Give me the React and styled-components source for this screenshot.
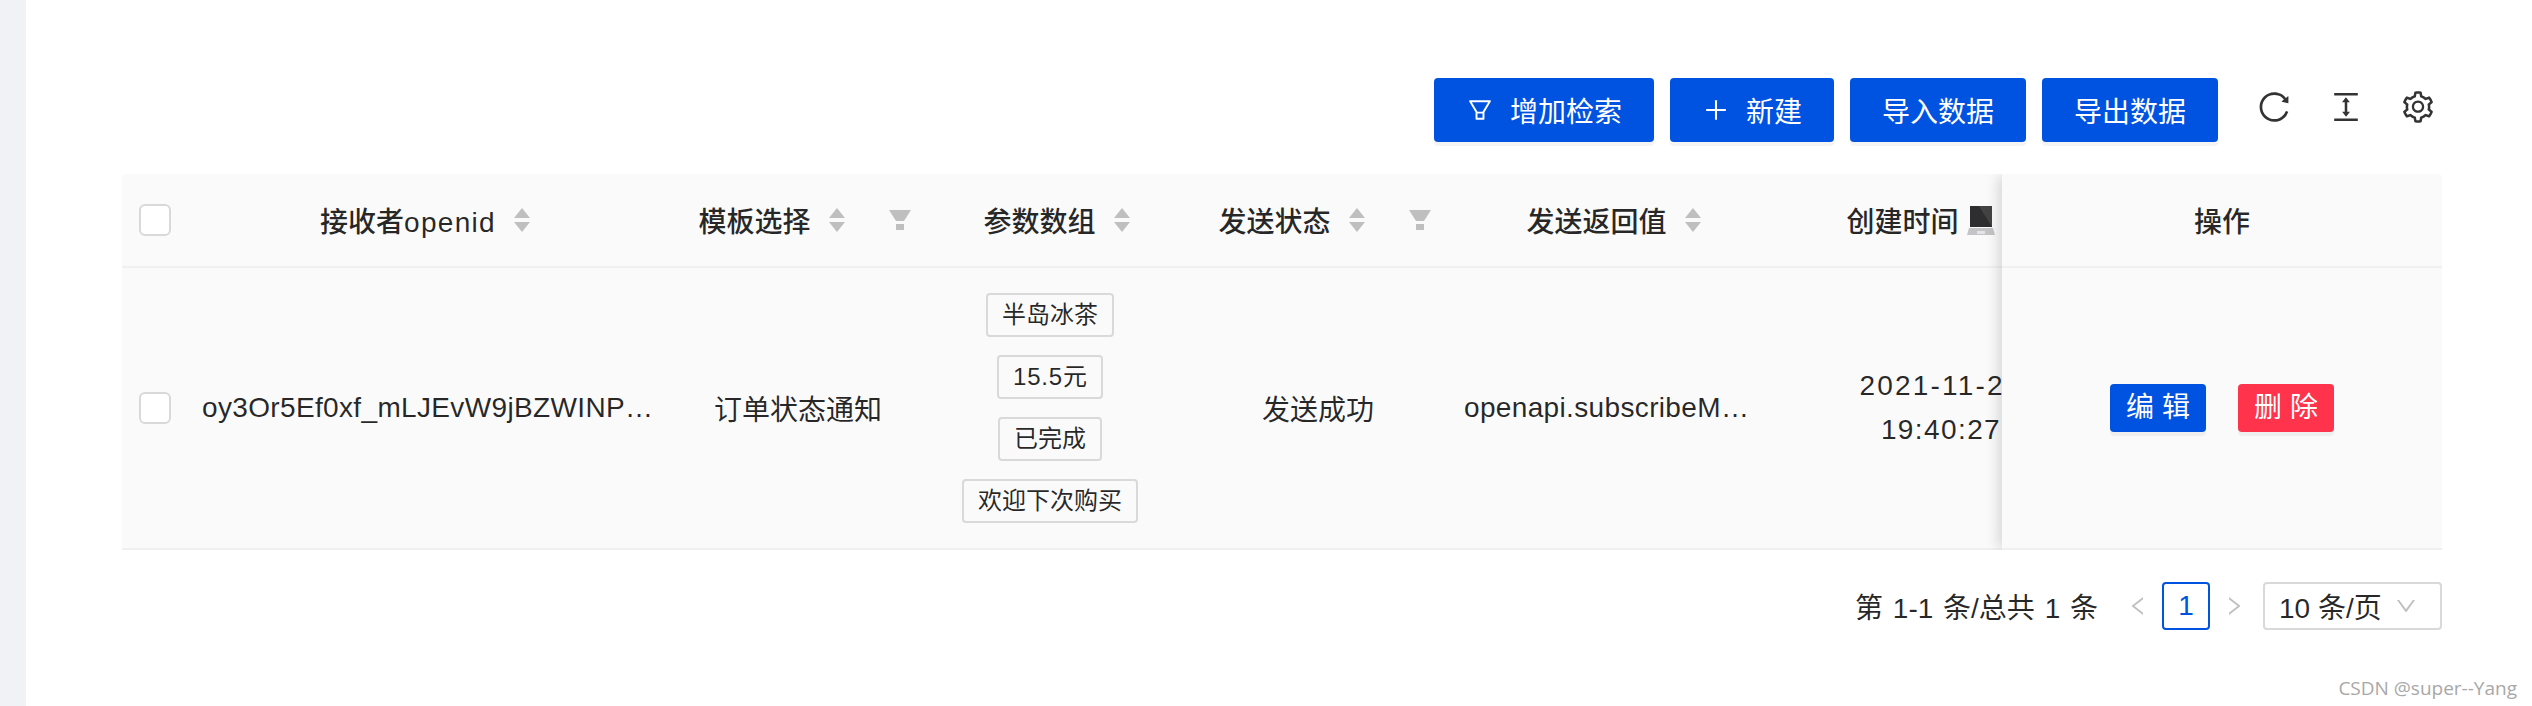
import React from "react";
import styled, { createGlobalStyle } from "styled-components";
import {
  AiOutlineFilter,
  AiOutlinePlus,
  AiOutlineReload,
  AiOutlineColumnHeight,
  AiOutlineSetting,
  AiOutlineLeft,
  AiOutlineRight,
  AiOutlineDown,
} from "react-icons/ai";

const GlobalStyle = createGlobalStyle`
  html, body {
    margin: 0;
    padding: 0;
    background: #fff;
    overflow: hidden;
  }
  * {
    box-sizing: border-box;
  }
  body {
    font-family: "Liberation Sans", "Noto Sans CJK SC", sans-serif;
    font-size: 28px;
    color: rgba(0, 0, 0, 0.85);
  }
`;

const COLUMNS = "53px 487px 272px 232px 304px 274px 394px";

const Page = styled.div`
  position: relative;
  display: flex;
  height: 706px;
`;

const Sidebar = styled.div`
  width: 26px;
  background: #f0f2f5;
`;

const Content = styled.div`
  flex: 1;
  min-width: 0;
  padding: 78px 90px 0 96px;
`;

const Toolbar = styled.div`
  display: flex;
  justify-content: flex-end;
  align-items: center;
  gap: 16px;
  padding-right: 6px;
`;

const Button = styled.button`
  display: flex;
  align-items: center;
  justify-content: center;
  gap: 16px;
  height: 64px;
  padding: 0 32px;
  border: none;
  border-radius: 4px;
  background: #0052e0;
  color: #fff;
  font: inherit;
  box-shadow: 0 4px 0 rgba(0, 0, 0, 0.045);

  svg {
    font-size: 28px;
  }
`;

const ToolIcons = styled.div`
  display: flex;
  gap: 36px;
  margin: 0 0 6px 22px;
  color: #333;
  font-size: 36px;

  svg {
    display: block;
  }
`;

const Table = styled.div`
  display: flex;
  margin-top: 32px;
  background: #fafafa;
  border-radius: 4px 4px 0 0;
  overflow: hidden;
`;

const ScrollPart = styled.div`
  flex: 1;
  min-width: 0;
  overflow: hidden;
`;

const GridRow = styled.div`
  display: grid;
  grid-template-columns: ${COLUMNS};
  height: ${(p) => p.$height}px;
  border-bottom: 2px solid #f0f0f0;
`;

const FixedPart = styled.div`
  position: relative;
  width: 440px;
  flex: none;
  background: #fafafa;
  box-shadow: -6px 0 12px -2px rgba(0, 0, 0, 0.14);
`;

const FixedRow = styled.div`
  display: flex;
  align-items: center;
  justify-content: center;
  gap: 32px;
  height: ${(p) => p.$height}px;
  border-bottom: 2px solid #f0f0f0;
`;

const HeadCell = styled.div`
  display: flex;
  align-items: center;
  justify-content: center;
  padding-left: ${(p) => p.$left || 13}px;
  padding-right: ${(p) => p.$right || 0}px;
  font-weight: 500;
  white-space: nowrap;
`;

const HeadTitle = styled.span`
  font-weight: 500;
`;

const Latin = styled.span`
  letter-spacing: ${(p) => p.$spacing}px;
`;

const Sorter = styled.svg`
  flex: none;
  width: 16px;
  height: 24px;
  margin-left: 18px;
  fill: #bfbfbf;
`;

const FilterMark = styled.svg`
  flex: none;
  width: 22px;
  height: 20px;
  margin-left: 44px;
  fill: #bfbfbf;
`;

const Laptop = styled.svg`
  flex: none;
  width: 28px;
  height: 30px;
  margin-left: 8px;
`;

const Cell = styled.div`
  display: flex;
  flex-direction: ${(p) => (p.$stack ? "column" : "row")};
  align-items: center;
  justify-content: ${(p) => (p.$inset ? "flex-start" : "center")};
  gap: 18px;
  min-width: 0;
  padding-left: ${(p) => p.$inset || 0}px;
  white-space: nowrap;
`;

const CheckCell = styled.div`
  display: flex;
  align-items: center;
  padding-left: 17px;
`;

const Checkbox = styled.span`
  display: block;
  width: 32px;
  height: 32px;
  background: #fff;
  border: 2px solid #d9d9d9;
  border-radius: 6px;
`;

const Clipped = styled.span`
  display: block;
  flex: none;
  width: ${(p) => p.$width}px;
  overflow: hidden;
  text-overflow: ellipsis;
  letter-spacing: 0.35px;
`;

const DateText = styled.div`
  line-height: 44px;
  text-align: center;
  letter-spacing: 1.4px;
`;

const Tag = styled.span`
  display: block;
  height: 44px;
  padding: 0 14px;
  line-height: 40px;
  font-size: 24px;
  background: #fafafa;
  border: 2px solid #d9d9d9;
  border-radius: 4px;
`;

const ActionButton = styled.button`
  width: 96px;
  height: 48px;
  padding: 0;
  border: none;
  border-radius: 4px;
  background: ${(p) => (p.$danger ? "#ff334b" : "#0052e0")};
  color: #fff;
  font: inherit;
  font-size: 28px;
  line-height: 48px;
  box-shadow: 0 4px 0 rgba(0, 0, 0, 0.045);
`;

const Pagination = styled.div`
  display: flex;
  justify-content: flex-end;
  align-items: center;
  height: 48px;
  margin-top: 32px;
`;

const Total = styled.span`
  margin-right: 28px;
  word-spacing: 2px;
`;

const PageArrow = styled.span`
  display: flex;
  align-items: center;
  justify-content: center;
  width: 24px;
  color: #bfbfbf;
  font-size: 24px;
`;

const PageItem = styled.span`
  width: 48px;
  height: 48px;
  margin: 0 12px;
  border: 2px solid #0052e0;
  border-radius: 4px;
  color: #0052e0;
  line-height: 44px;
  text-align: center;
`;

const SizeSelect = styled.div`
  display: flex;
  align-items: center;
  justify-content: space-between;
  width: 179px;
  height: 48px;
  margin-left: 17px;
  padding: 0 22px 0 14px;
  border: 2px solid #d9d9d9;
  border-radius: 4px;

  svg {
    color: #bfbfbf;
    font-size: 24px;
  }
`;

const Watermark = styled.span`
  position: absolute;
  right: 15px;
  bottom: 5px;
  color: #a8a8a8;
  font-family: "Open Sans", sans-serif;
  font-size: 19px;
`;

const SortIcon = () => (
  <Sorter viewBox="0 0 16 24">
    <path d="M8 0 L16 10 H0 Z" />
    <path d="M0 14 H16 L8 24 Z" />
  </Sorter>
);

const FilterIcon = () => (
  <FilterMark viewBox="0 0 22 20">
    <path d="M0 0 H22 L15 11 H7 Z" />
    <rect x="7" y="14" width="8" height="6" />
  </FilterMark>
);

const LaptopIcon = () => (
  <Laptop viewBox="0 0 28 30">
    <path d="M3 1 H25 V22 H3 Z" fill="#2e2e30" />
    <path d="M12 1 H25 V22 Z" fill="#555" opacity="0.55" />
    <path d="M2 23 H26 L28 30 H0 Z" fill="#c4c4c6" />
    <rect x="10" y="26" width="8" height="3" fill="#e4e4e6" />
  </Laptop>
);

const App = () => {
  return (
    <Page>
      <GlobalStyle />
      <Sidebar />
      <Content>
        <Toolbar>
          <Button>
            <AiOutlineFilter />
            增加检索
          </Button>
          <Button>
            <AiOutlinePlus />
            新建
          </Button>
          <Button>导入数据</Button>
          <Button>导出数据</Button>
          <ToolIcons>
            <AiOutlineReload />
            <AiOutlineColumnHeight />
            <AiOutlineSetting />
          </ToolIcons>
        </Toolbar>

        <Table>
          <ScrollPart>
            <GridRow $height={94}>
              <CheckCell>
                <Checkbox />
              </CheckCell>
              <HeadCell>
                <HeadTitle>
                  接收者<Latin $spacing={1.3}>openid</Latin>
                </HeadTitle>
                <SortIcon />
              </HeadCell>
              <HeadCell>
                <HeadTitle>模板选择</HeadTitle>
                <SortIcon />
                <FilterIcon />
              </HeadCell>
              <HeadCell>
                <HeadTitle>参数数组</HeadTitle>
                <SortIcon />
              </HeadCell>
              <HeadCell>
                <HeadTitle>发送状态</HeadTitle>
                <SortIcon />
                <FilterIcon />
              </HeadCell>
              <HeadCell>
                <HeadTitle>发送返回值</HeadTitle>
                <SortIcon />
              </HeadCell>
              <HeadCell $left={1} $right={8}>
                <HeadTitle>创建时间</HeadTitle>
                <LaptopIcon />
                <SortIcon />
              </HeadCell>
            </GridRow>
            <GridRow $height={282}>
              <CheckCell>
                <Checkbox />
              </CheckCell>
              <Cell $inset={27}>
                <Clipped $width={454}>oy3Or5Ef0xf_mLJEvW9jBZWINPkQ2x</Clipped>
              </Cell>
              <Cell>订单状态通知</Cell>
              <Cell $stack>
                <Tag>半岛冰茶</Tag>
                <Tag>
                  <Latin $spacing={0.8}>15.5</Latin>元
                </Tag>
                <Tag>已完成</Tag>
                <Tag>欢迎下次购买</Tag>
              </Cell>
              <Cell>发送成功</Cell>
              <Cell>
                <Clipped $width={286}>openapi.subscribeMessage.send:ok</Clipped>
              </Cell>
              <Cell>
                <DateText>
                  <Latin $spacing={2.2}>2021-11-26</Latin>
                  <br />
                  19:40:27
                </DateText>
              </Cell>
            </GridRow>
          </ScrollPart>
          <FixedPart>
            <FixedRow $height={94}>
              <HeadTitle>操作</HeadTitle>
            </FixedRow>
            <FixedRow $height={282}>
              <ActionButton>编 辑</ActionButton>
              <ActionButton $danger>删 除</ActionButton>
            </FixedRow>
          </FixedPart>
        </Table>

        <Pagination>
          <Total>第 1-1 条/总共 1 条</Total>
          <PageArrow>
            <AiOutlineLeft />
          </PageArrow>
          <PageItem>1</PageItem>
          <PageArrow>
            <AiOutlineRight />
          </PageArrow>
          <SizeSelect>
            10 条/页
            <AiOutlineDown />
          </SizeSelect>
        </Pagination>
      </Content>
      <Watermark>CSDN @super--Yang</Watermark>
    </Page>
  );
};

export default App;
